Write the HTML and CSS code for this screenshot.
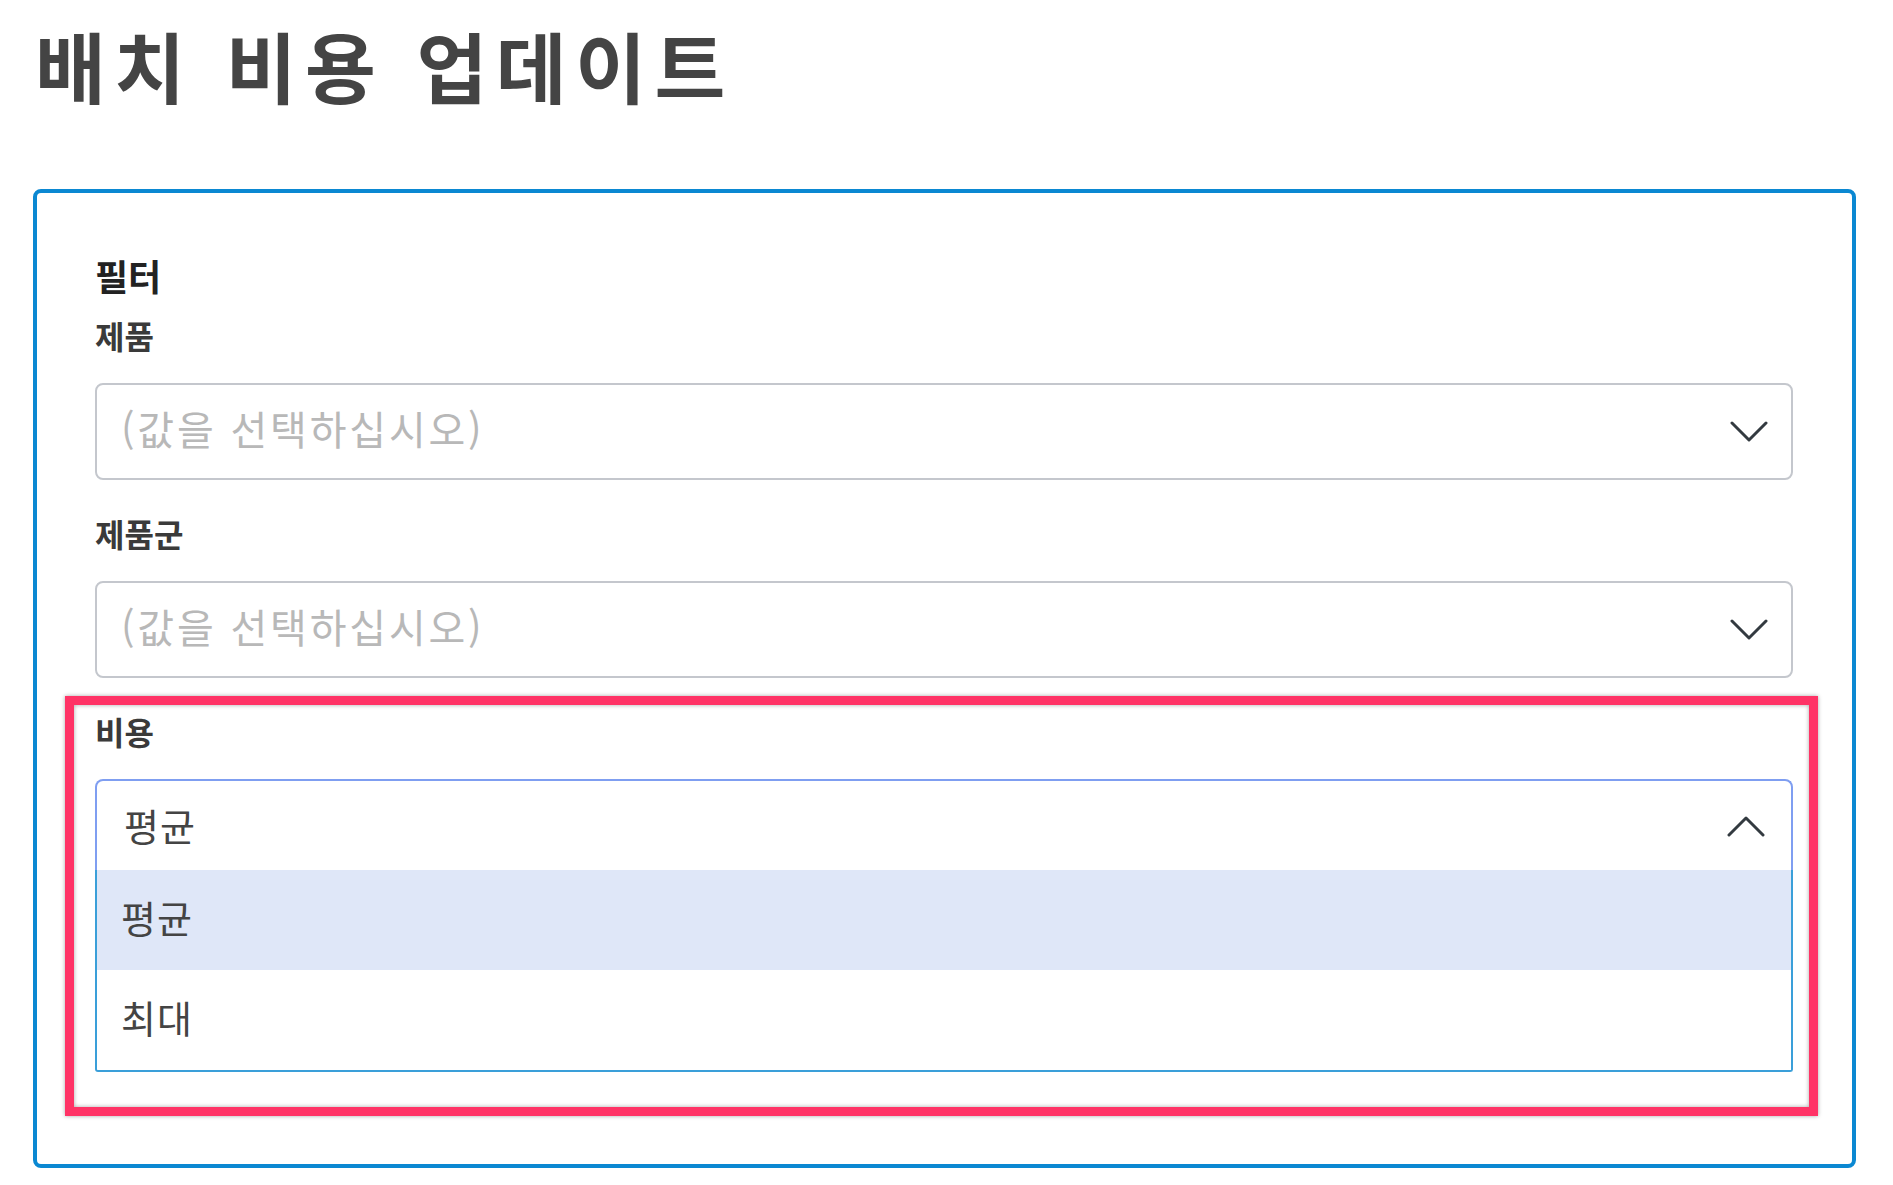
FILE: index.html
```html
<!DOCTYPE html>
<html lang="ko">
<head>
<meta charset="utf-8">
<title>배치 비용 업데이트</title>
<link rel="stylesheet" href="styles.css">
</head>
<body>
<h1 class="page-title">배치 비용 업데이트</h1>
<section class="card">
  <h2 class="section-title">필터</h2>
  <div class="field field-first">
    <div class="field-label">제품</div>
    <div class="select">
      <span class="placeholder">(값을 선택하십시오)</span>
      <svg class="chevron" width="38" height="22" viewBox="0 0 38 22"><path d="M2 2 L19 19 L36 2"/></svg>
    </div>
  </div>
  <div class="field">
    <div class="field-label">제품군</div>
    <div class="select">
      <span class="placeholder">(값을 선택하십시오)</span>
      <svg class="chevron" width="38" height="22" viewBox="0 0 38 22"><path d="M2 2 L19 19 L36 2"/></svg>
    </div>
  </div>
  <div class="field field-marked">
    <div class="field-label">비용</div>
    <div class="dropdown">
      <div class="dropdown-head">
        <span class="value">평균</span>
        <svg class="chevron" width="38" height="22" viewBox="0 0 38 22"><path d="M2 20 L19 3 L36 20"/></svg>
      </div>
      <ul class="options">
        <li class="option option-active">평균</li>
        <li class="option">최대</li>
      </ul>
    </div>
  </div>
</section>
</body>
</html>
```
FILE: styles.css
```css
* {
  box-sizing: border-box;
}

body {
  margin: 0;
  background: #ffffff;
  font-family: "Noto Sans CJK KR", "Noto Sans", sans-serif;
  color: #333333;
}

.page-title {
  margin: 20px 0 80px 35px;
  font-size: 77px;
  line-height: 89px;
  height: 89px;
  font-weight: 700;
  letter-spacing: 8.5px;
  word-spacing: 2px;
  color: #444444;
  white-space: nowrap;
}

.card {
  margin: 0 37px 0 33px;
  height: 979px;
  border: 4px solid #0b88d2;
  border-radius: 8px;
  padding: 58px 59px 0 58px;
}

.section-title {
  margin: 0 0 16px 0;
  font-size: 36px;
  line-height: 48px;
  font-weight: 700;
  color: #222222;
}

.field {
  margin-top: 33px;
}

.field-first {
  margin-top: 0;
}

.field-label {
  font-size: 32px;
  line-height: 40px;
  font-weight: 700;
  color: #3a3a3a;
  margin-bottom: 28px;
}

.select {
  height: 97px;
  border: 2px solid #c4c7cd;
  border-radius: 8px;
  display: flex;
  align-items: center;
  justify-content: space-between;
  padding: 0 23px 0 24px;
}

.placeholder {
  font-size: 40px;
  letter-spacing: 2.8px;
  color: #b8b8b8;
  margin-top: -7px;
}

.chevron path {
  fill: none;
  stroke: #333a40;
  stroke-width: 3;
  stroke-linecap: round;
  stroke-linejoin: round;
}

.field-marked {
  position: relative;
}

.field-marked::after {
  content: "";
  position: absolute;
  top: -15px;
  left: -30px;
  right: -25px;
  bottom: -44px;
  border: 9px solid #ff3366;
  box-shadow: 0 0 4px rgba(0, 0, 0, 0.35), inset 0 0 4px rgba(0, 0, 0, 0.35);
  pointer-events: none;
}

.dropdown {
  display: flex;
  flex-direction: column;
}

.dropdown-head {
  height: 91px;
  border: 2px solid #7f9ef1;
  border-bottom: none;
  border-radius: 8px 8px 0 0;
  display: flex;
  align-items: center;
  justify-content: space-between;
  padding: 0 26px 0 27px;
}

.value {
  font-size: 38px;
  letter-spacing: 1px;
  color: #444444;
  margin-top: -2px;
}

.options {
  list-style: none;
  margin: 0;
  padding: 0;
  border: 2px solid #3a9fd9;
  border-top: none;
  border-radius: 0 0 3px 3px;
}

.option {
  height: 100px;
  display: flex;
  align-items: center;
  padding: 0 0 7px 24px;
  font-size: 38px;
  letter-spacing: 1px;
  color: #444444;
}

.option-active {
  background: #dfe7f8;
}
```
